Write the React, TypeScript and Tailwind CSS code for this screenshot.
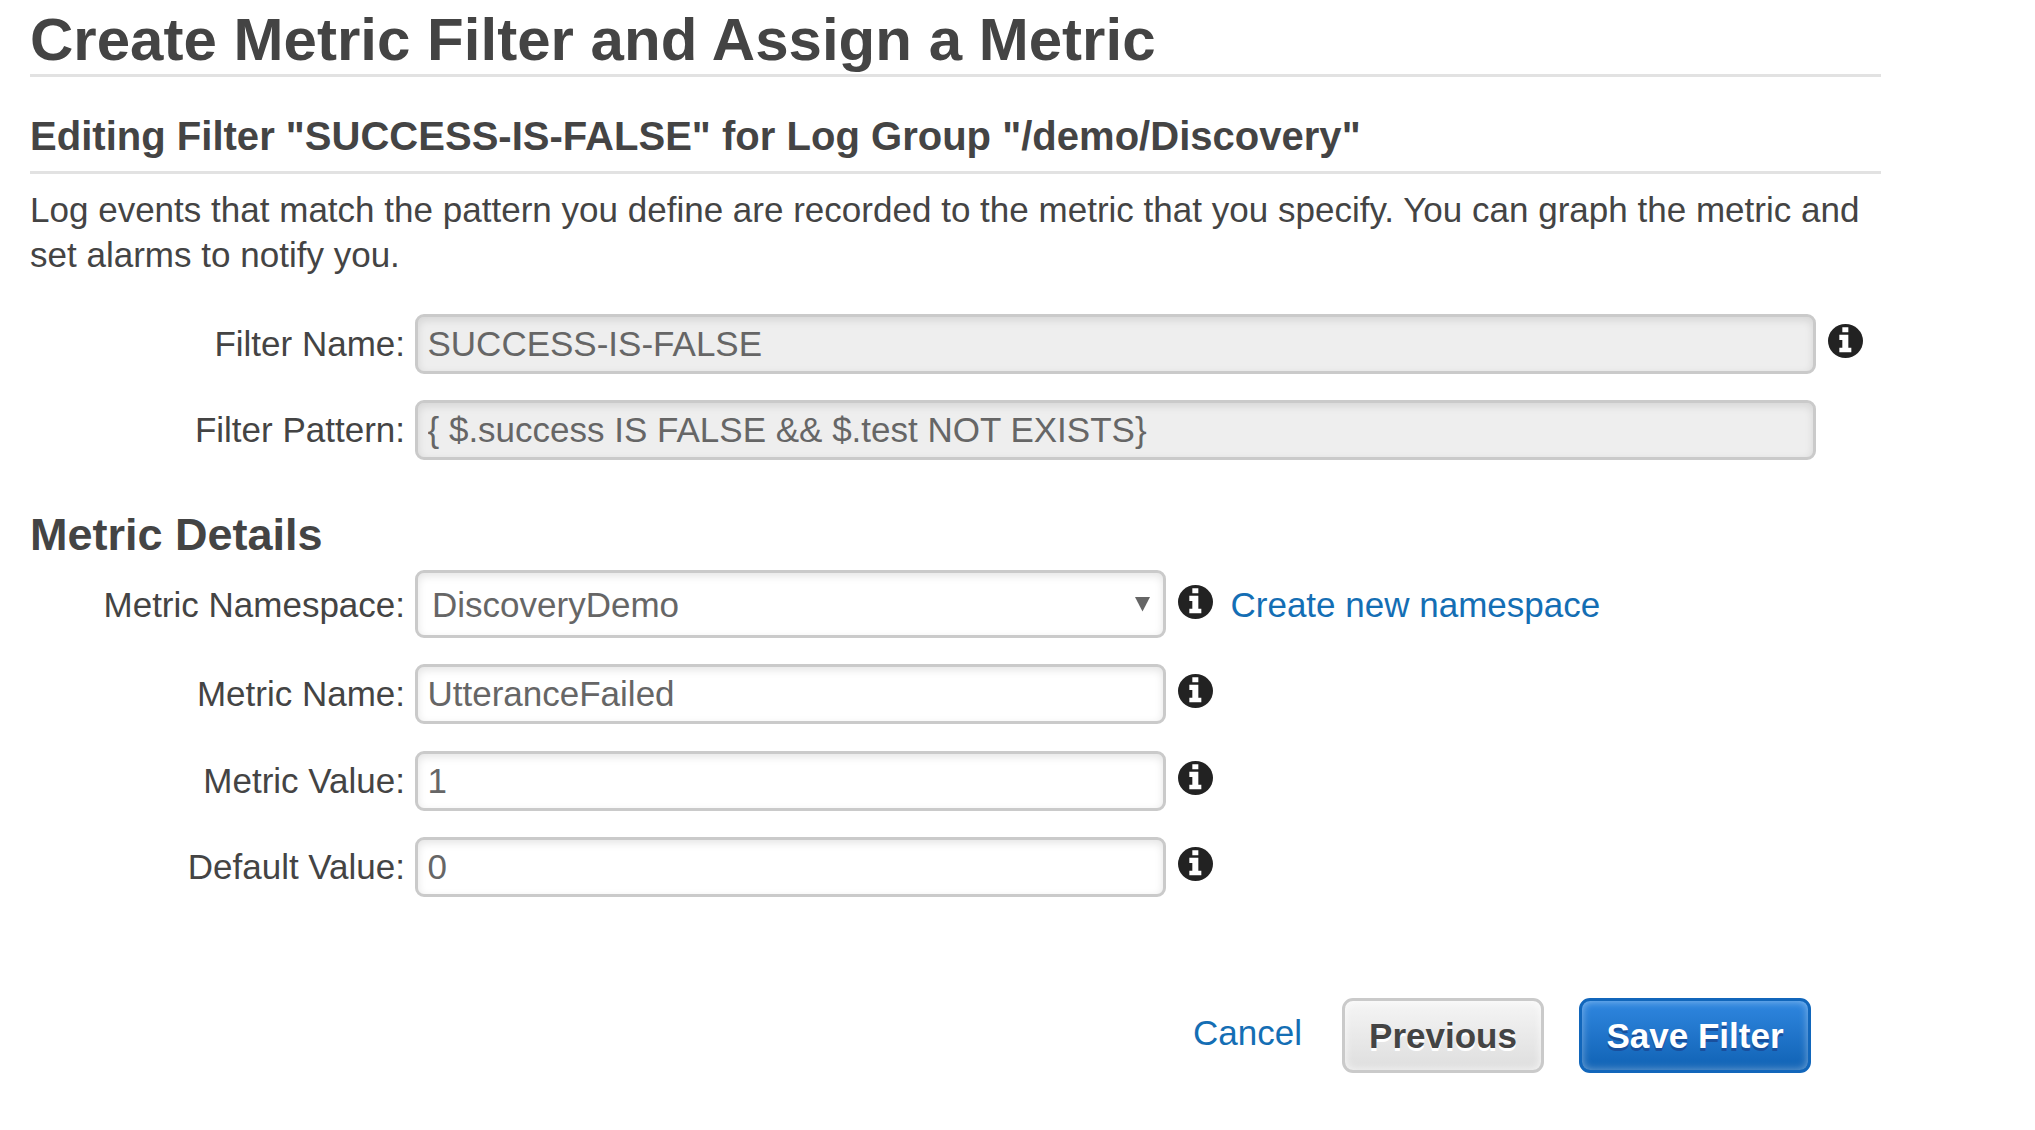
import type { ReactNode } from "react";

const fieldClass =
  "shrink-0 rounded-[9px] border-[3px] border-[#cacaca] text-[#666] shadow-[inset_0_3px_8px_rgba(0,0,0,0.11)] outline-none";

function InfoIcon({ className }: { className: string }) {
  return (
    <svg viewBox="0 0 105 102" className={`h-[34px] w-[35px] shrink-0 ${className}`} aria-label="Info">
      <ellipse cx="52.5" cy="51" rx="52.5" ry="51" fill="#222" />
      <path d="M43 10H61V25H43ZM34 32H61V71H70V85H34V71H43V48H34Z" fill="#fff" />
    </svg>
  );
}

function Row({ label, className, labelClass, children }: { label: string; className: string; labelClass: string; children: ReactNode }) {
  return (
    <div className={`flex ${className}`}>
      <label className={`mr-[10px] w-[375px] shrink-0 text-right whitespace-nowrap ${labelClass}`}>{label}</label>
      {children}
    </div>
  );
}

function TextField({ value, className, readOnly }: { value: string; className: string; readOnly?: boolean }) {
  return <input type="text" defaultValue={value} readOnly={readOnly} className={`h-[60px] px-[9.5px] py-0 ${fieldClass} ${className}`} />;
}

export default function App() {
  return (
    <main className="min-h-[1130px] bg-white pl-[30px] font-['Liberation_Sans',Arial,sans-serif] text-[35px] text-[#444]">
      <div className="w-[1851px]">
        <h1 className="border-b-[3px] border-[#e2e2e2] pt-[6px] pb-px text-[60px] leading-[67px] font-bold tracking-[0.02px]">
          Create Metric Filter and Assign a Metric
        </h1>
        <h2 className="border-b-[3px] border-[#e2e2e2] pt-6 text-[40px] leading-[70px] font-bold tracking-[0.02px]">
          Editing Filter "SUCCESS-IS-FALSE" for Log Group "/demo/Discovery"
        </h2>
        <p className="mt-[13px] leading-[45px] tracking-[0.01px]">
          Log events that match the pattern you define are recorded to the metric that you specify. You can graph the metric and
          set alarms to notify you.
        </p>

        <Row label="Filter Name:" className="mt-[37px]" labelClass="leading-[60px]">
          <TextField value="SUCCESS-IS-FALSE" readOnly className="w-[1401px] bg-[#eee]" />
          <InfoIcon className="mt-[10px] ml-3" />
        </Row>
        <Row label="Filter Pattern:" className="mt-[26px]" labelClass="leading-[60px]">
          <TextField value="{ $.success IS FALSE && $.test NOT EXISTS}" readOnly className="w-[1401px] bg-[#eee]" />
        </Row>

        <h3 className="mt-[49px] text-[45px] leading-[51px] font-bold">Metric Details</h3>

        <Row label="Metric Namespace:" className="mt-[10px]" labelClass="leading-[70px] -mb-[2px]">
          <button type="button" className={`flex h-[68px] w-[751px] justify-between bg-white pr-[13px] pl-[14px] leading-[64px] ${fieldClass}`}>
            <span>DiscoveryDemo</span>
            <svg viewBox="0 0 15 15" className="mt-6 size-[15px]" aria-hidden="true">
              <path d="M0 0H15L7.5 14.5Z" fill="#666" />
            </svg>
          </button>
          <InfoIcon className="mt-[15px] ml-3" />
          <a href="#" className="-mb-[2px] ml-[17.5px] leading-[70px] whitespace-nowrap text-[#146eb4]">
            Create new namespace
          </a>
        </Row>
        <Row label="Metric Name:" className="mt-[26px]" labelClass="leading-[60px]">
          <TextField value="UtteranceFailed" className="w-[751px] bg-white" />
          <InfoIcon className="mt-[10px] ml-3" />
        </Row>
        <Row label="Metric Value:" className="mt-[27px]" labelClass="leading-[60px]">
          <TextField value="1" className="w-[751px] bg-white" />
          <InfoIcon className="mt-[10px] ml-3" />
        </Row>
        <Row label="Default Value:" className="mt-[26px]" labelClass="leading-[60px]">
          <TextField value="0" className="w-[751px] bg-white" />
          <InfoIcon className="mt-[10px] ml-3" />
        </Row>

        <div className="mt-[101px] mr-[70px] flex justify-end">
          <a href="#" className="mr-10 leading-[70px] text-[#146eb4]">
            Cancel
          </a>
          <button
            type="button"
            className="mr-[35px] h-[75px] w-[202px] rounded-[11px] border-[3px] border-[#cacaca] bg-linear-to-b from-[#f5f5f5] to-[#dedede] leading-[69px] font-bold shadow-[inset_0_0_8px_rgba(255,255,255,0.8)] [text-shadow:0_3px_0_#fff]"
          >
            Previous
          </button>
          <button
            type="button"
            className="h-[75px] w-[232px] rounded-[11px] border-[3px] border-[#1166bb] bg-linear-to-b from-[#2f87e0] to-[#0f62b4] leading-[69px] font-bold text-white shadow-[inset_0_0_8px_rgba(255,255,255,0.45)] [text-shadow:0_3px_0_#194f9c]"
          >
            Save Filter
          </button>
        </div>
      </div>
    </main>
  );
}
